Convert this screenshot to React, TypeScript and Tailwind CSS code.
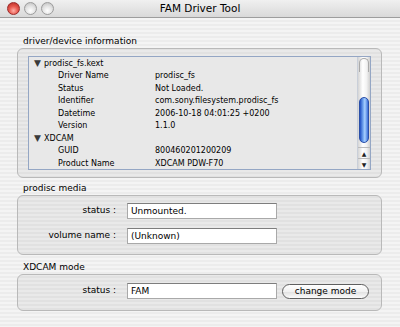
import React from "react";

type Row = { head?: boolean; label: string; value?: string };

const rows: Row[] = [
  { head: true, label: "prodisc_fs.kext" },
  { label: "Driver Name", value: "prodisc_fs" },
  { label: "Status", value: "Not Loaded." },
  { label: "Identifier", value: "com.sony.filesystem.prodisc_fs" },
  { label: "Datetime", value: "2006-10-18 04:01:25 +0200" },
  { label: "Version", value: "1.1.0" },
  { head: true, label: "XDCAM" },
  { label: "GUID", value: "800460201200209" },
  { label: "Product Name", value: "XDCAM PDW-F70" },
];

function Light({ red }: { red?: boolean }) {
  return (
    <div
      className={
        red
          ? "w-[13px] h-[13px] rounded-full border border-[#9a2a2a] bg-[radial-gradient(circle_at_50%_70%,#ffb0a8_0%,#e85a4f_45%,#b3261e_100%)]"
          : "w-[13px] h-[13px] rounded-full border border-[#9c9c9c] bg-[radial-gradient(circle_at_50%_70%,#ffffff_0%,#e2e2e2_50%,#b9b9b9_100%)]"
      }
    />
  );
}

function Field({ text }: { text: string }) {
  return (
    <div className="w-[150px] h-[16px] bg-white border border-[#a9a9a9] border-t-[#7d7d7d] px-[3px] text-[9px] leading-[14px] text-black">
      {text}
    </div>
  );
}

function Group({ title, children, className }: { title: string; children: React.ReactNode; className?: string }) {
  return (
    <div className={className}>
      <div className="pl-[6px] text-[9px] leading-[12px] text-black">{title}</div>
      <div className="mt-[1px] rounded-[6px] border border-[#b9b9b9] bg-black/[0.045]">{children}</div>
    </div>
  );
}

export default function App() {
  return (
    <div className="w-[400px] h-[327px] overflow-hidden font-['DejaVu_Sans',sans-serif] bg-[repeating-linear-gradient(to_bottom,#ececec_0px,#ececec_2px,#f4f4f4_2px,#f4f4f4_4px)]">
      {/* title bar */}
      <div className="relative h-[18px] flex items-center border-b border-[#9d9d9d] bg-[linear-gradient(to_bottom,#f0f0f0,#d9d9d9)]">
        <div className="flex items-center gap-[4px] pl-[7px]">
          <Light red />
          <Light />
          <Light />
        </div>
        <div className="absolute inset-0 flex items-center justify-center text-[10.5px] text-black">
          FAM Driver Tool
        </div>
      </div>

      <div className="px-[17px] pr-[18px]">
        <Group title="driver/device information" className="mt-[17px]">
          <div className="mx-[10px] my-[7px] h-[114px] flex border border-[#94a6c4] bg-[#e8e8e8]">
            <div className="flex-1 pt-[0.5px]">
              {rows.map((r) =>
                r.head ? (
                  <div key={r.label} className="flex items-center h-[12.5px] pl-[5px] text-[8px] text-black">
                    <span className="text-[9px] leading-[9px] w-[10px] text-[#3a3a3a]">▼</span>
                    <span>{r.label}</span>
                  </div>
                ) : (
                  <div key={r.label} className="flex items-center h-[12.5px] text-[8px] text-black">
                    <span className="pl-[29px] w-[126px]">{r.label}</span>
                    <span>{r.value}</span>
                  </div>
                )
              )}
            </div>
            <div className="w-[13px] flex flex-col border-l border-[#c9cfd9] bg-[linear-gradient(to_right,#d4d4d4,#ffffff_40%,#f3f3f3_70%,#d0d0d0)]">
              <div className="flex-1 relative">
                <div className="absolute left-[1px] right-[1px] top-[1px] h-[14px] rounded-t-full border border-b-0 border-[#a9a9a9]" />
                <div className="absolute left-[1px] right-[1px] top-[40px] h-[46px] rounded-full border border-[#2a4fa8] bg-[linear-gradient(to_right,#1f4fc4,#7fb2f5_45%,#a9d0ff_60%,#3a6fd9)]" />
              </div>
              <div className="h-[11px] flex items-center justify-center text-[6px] text-[#222] border-t border-[#bbbbbb]">▲</div>
              <div className="h-[11px] flex items-center justify-center text-[6px] text-[#222] border-t border-[#bbbbbb]">▼</div>
            </div>
          </div>
        </Group>

        <Group title="prodisc media" className="mt-[4px]">
          <div className="flex flex-col gap-[9px] pt-[7px] pb-[10px]">
            <div className="flex items-center">
              <div className="w-[98px] text-right text-[9px] text-black">status :</div>
              <div className="ml-[11px]"><Field text="Unmounted." /></div>
            </div>
            <div className="flex items-center">
              <div className="w-[98px] text-right text-[9px] text-black">volume name :</div>
              <div className="ml-[11px]"><Field text="(Unknown)" /></div>
            </div>
          </div>
        </Group>

        <Group title="XDCAM mode" className="mt-[6px]">
          <div className="flex items-center pt-[8px] pb-[11px]">
            <div className="w-[98px] text-right text-[9px] text-black">status :</div>
            <div className="ml-[11px]"><Field text="FAM" /></div>
            <button className="ml-[5px] w-[87px] h-[15px] rounded-full border border-[#5f5f5f] bg-[linear-gradient(to_bottom,#ffffff,#f1f1f1_50%,#e2e2e2_55%,#fbfbfb)] text-[9px] leading-[13px] text-black">
              change mode
            </button>
          </div>
        </Group>
      </div>
    </div>
  );
}
